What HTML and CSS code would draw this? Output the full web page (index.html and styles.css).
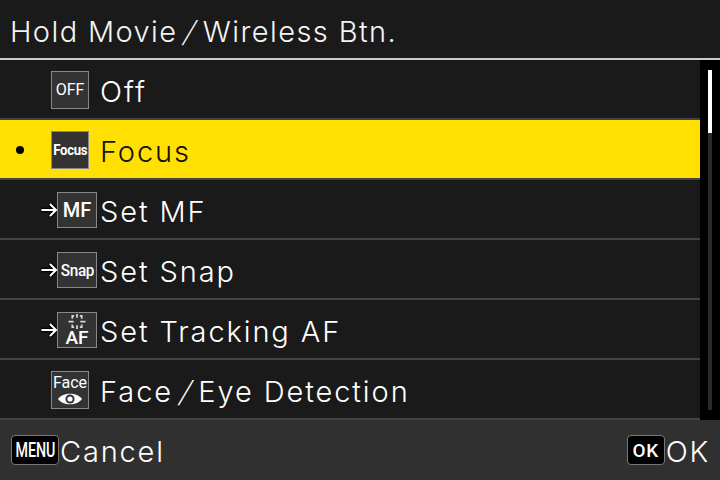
FILE: index.html
```html
<!DOCTYPE html>
<html lang="en">
<head>
    <meta charset="UTF-8">
    <title>Hold Movie/Wireless Btn.</title>
    <link rel="stylesheet" href="styles.css">
</head>
<body>
    <div class="screen">
        <div class="header"><span>Hold Movie<span class="slash">/</span>Wireless Btn.</span></div>
        <div class="middle">
            <div class="menu-list">
                <div class="menu-row">
                    <div class="slot">
                        <div class="icon"><span class="icon-text off">OFF</span></div>
                    </div>
                    <span class="label">Off</span>
                </div>
                <div class="menu-row selected">
                    <div class="slot">
                        <span class="bullet"></span>
                        <div class="icon"><span class="icon-text focus">Focus</span></div>
                    </div>
                    <span class="label">Focus</span>
                </div>
                <div class="menu-row">
                    <div class="slot">
                        <svg class="arrow" viewBox="0 0 16 14">
                            <path d="M0.5 7H15M9 1L15 7L9 13" fill="none" stroke="#000" stroke-width="4.5"/>
                            <path d="M0.5 7H15M9 1L15 7L9 13" fill="none" stroke="#fff" stroke-width="2"/>
                        </svg>
                        <div class="icon wide"><span class="icon-text mf">MF</span></div>
                    </div>
                    <span class="label">Set MF</span>
                </div>
                <div class="menu-row">
                    <div class="slot">
                        <svg class="arrow" viewBox="0 0 16 14">
                            <path d="M0.5 7H15M9 1L15 7L9 13" fill="none" stroke="#000" stroke-width="4.5"/>
                            <path d="M0.5 7H15M9 1L15 7L9 13" fill="none" stroke="#fff" stroke-width="2"/>
                        </svg>
                        <div class="icon wide"><span class="icon-text snap">Snap</span></div>
                    </div>
                    <span class="label">Set Snap</span>
                </div>
                <div class="menu-row">
                    <div class="slot">
                        <svg class="arrow" viewBox="0 0 16 14">
                            <path d="M0.5 7H15M9 1L15 7L9 13" fill="none" stroke="#000" stroke-width="4.5"/>
                            <path d="M0.5 7H15M9 1L15 7L9 13" fill="none" stroke="#fff" stroke-width="2"/>
                        </svg>
                        <div class="icon wide stacked">
                            <svg class="target" viewBox="0 0 20 18">
                                <path d="M10 0V4M5 5V2H7M15 5V2H13M1 8H6.5M13.500 8H19M5 11V14H7M15 11V14H13M10 12V16" fill="none" stroke="#d8d8d8" stroke-width="1.8"/>
                            </svg>
                            <span class="icon-text af">AF</span>
                        </div>
                    </div>
                    <span class="label">Set Tracking AF</span>
                </div>
                <div class="menu-row">
                    <div class="slot">
                        <div class="icon stacked">
                            <span class="icon-text face">Face</span>
                            <svg class="eye" viewBox="0 0 24 14">
                                <path d="M0 7C5 0 19 0 24 7C19 14 5 14 0 7Z" fill="#fff"/>
                                <circle cx="12" cy="7" r="4.6" fill="#333"/>
                                <circle cx="12" cy="7" r="2.6" fill="#fff"/>
                            </svg>
                        </div>
                    </div>
                    <span class="label">Face<span class="slash">/</span>Eye Detection</span>
                </div>
            </div>
            <div class="scroll-col">
                <div class="scroll-track">
                    <div class="scroll-thumb"></div>
                </div>
            </div>
        </div>
        <div class="footer">
            <div class="footer-item">
                <span class="key"><span class="key-text">MENU</span></span>
                <span class="footer-label">Cancel</span>
            </div>
            <div class="footer-item">
                <span class="key ok"><span class="key-text">OK</span></span>
                <span class="footer-label">OK</span>
            </div>
        </div>
    </div>
</body>
</html>
```

FILE: styles.css
```css
* {
    margin: 0;
    padding: 0;
    box-sizing: border-box;
}

body {
    background: #1a1a1a;
    font-family: Inter, Roboto, 'Liberation Sans', sans-serif;
    color: #fff;
}

.screen {
    width: 720px;
    height: 480px;
    display: flex;
    flex-direction: column;
    overflow: hidden;
}

.header {
    height: 60px;
    padding: 4px 0 0 10px;
    display: flex;
    align-items: center;
    font-size: 29px;
    font-weight: 300;
    letter-spacing: 1.4px;
    color: #f4f4f4;
    border-bottom: 2px solid #ccc;
}

/* the camera font has a much wider slash */
.slash {
    display: inline-block;
    margin: 0 8px;
    font-weight: 100;
    letter-spacing: 0;
    transform: scaleX(2.2);
}

.middle {
    height: 360px;
    display: flex;
}

.menu-list {
    width: 700px;
}

.menu-row {
    height: 60px;
    display: flex;
    align-items: center;
    border-bottom: 2px solid #444;
    background: #1a1a1a;
}

.menu-row.selected {
    background: #ffe000;
    color: #111;
}

.slot {
    width: 100px;
    height: 100%;
    padding: 2px 3px 0 0;
    display: flex;
    align-items: center;
    justify-content: flex-end;
    position: relative;
}

.bullet {
    position: absolute;
    left: 16px;
    top: 26px;
    width: 8px;
    height: 8px;
    border-radius: 50%;
    background: #000;
}

.arrow {
    width: 16px;
    height: 14px;
}

.icon {
    width: 38px;
    height: 38px;
    margin-right: 8px;
    background: #333;
    border: 1px solid #888;
    color: #fff;
    display: flex;
    align-items: center;
    justify-content: center;
    overflow: hidden;
}

.icon.wide {
    width: 40px;
    height: 36px;
    margin: 0;
}

.icon.stacked {
    flex-direction: column;
}

.icon-text {
    font-family: Roboto, sans-serif;
    line-height: 1;
    white-space: nowrap;
}

.off {
    font-size: 16px;
    font-weight: 400;
}

.focus {
    font-size: 15px;
    font-weight: 700;
    letter-spacing: -0.4px;
    transform: scaleX(0.88);
}

.mf {
    font-size: 20px;
    font-weight: 500;
}

.snap {
    font-size: 17px;
    font-weight: 500;
    letter-spacing: -0.4px;
    transform: scaleX(0.9);
}

.af {
    font-size: 19px;
    font-weight: 500;
    margin-top: -3px;
}

.face {
    font-size: 16px;
    margin-top: 1px;
}

.target {
    width: 20px;
    height: 18px;
    margin-top: 1px;
}

.eye {
    width: 24px;
    height: 14px;
    margin-top: 1px;
}

.label {
    font-size: 29px;
    font-weight: 300;
    letter-spacing: 1.9px;
    padding-top: 4px;
}

.scroll-col {
    width: 20px;
    background: #000;
    display: flex;
    justify-content: center;
    padding-top: 10px;
}

.scroll-track {
    width: 4px;
    height: 340px;
    background: #2a2a2a;
}

.scroll-thumb {
    width: 4px;
    height: 63px;
    background: #fff;
}

.footer {
    height: 60px;
    background: #303030;
    display: flex;
    align-items: center;
    justify-content: space-between;
    padding: 0 10px 0 11px;
}

.footer-item {
    display: flex;
    align-items: center;
    gap: 1px;
}

.key {
    width: 48px;
    height: 30px;
    background: #000;
    border: 1px solid #777;
    border-radius: 4px;
    display: flex;
    align-items: center;
    justify-content: center;
}

.key-text {
    font-family: Roboto, sans-serif;
    font-size: 21px;
    font-weight: 500;
    transform: scaleX(0.68);
}

.key.ok {
    width: 38px;
}

.ok .key-text {
    font-size: 19px;
    letter-spacing: 0.5px;
    transform: none;
}

.footer-label {
    font-size: 29px;
    font-weight: 300;
    letter-spacing: 1.8px;
    padding-top: 2px;
}
```
